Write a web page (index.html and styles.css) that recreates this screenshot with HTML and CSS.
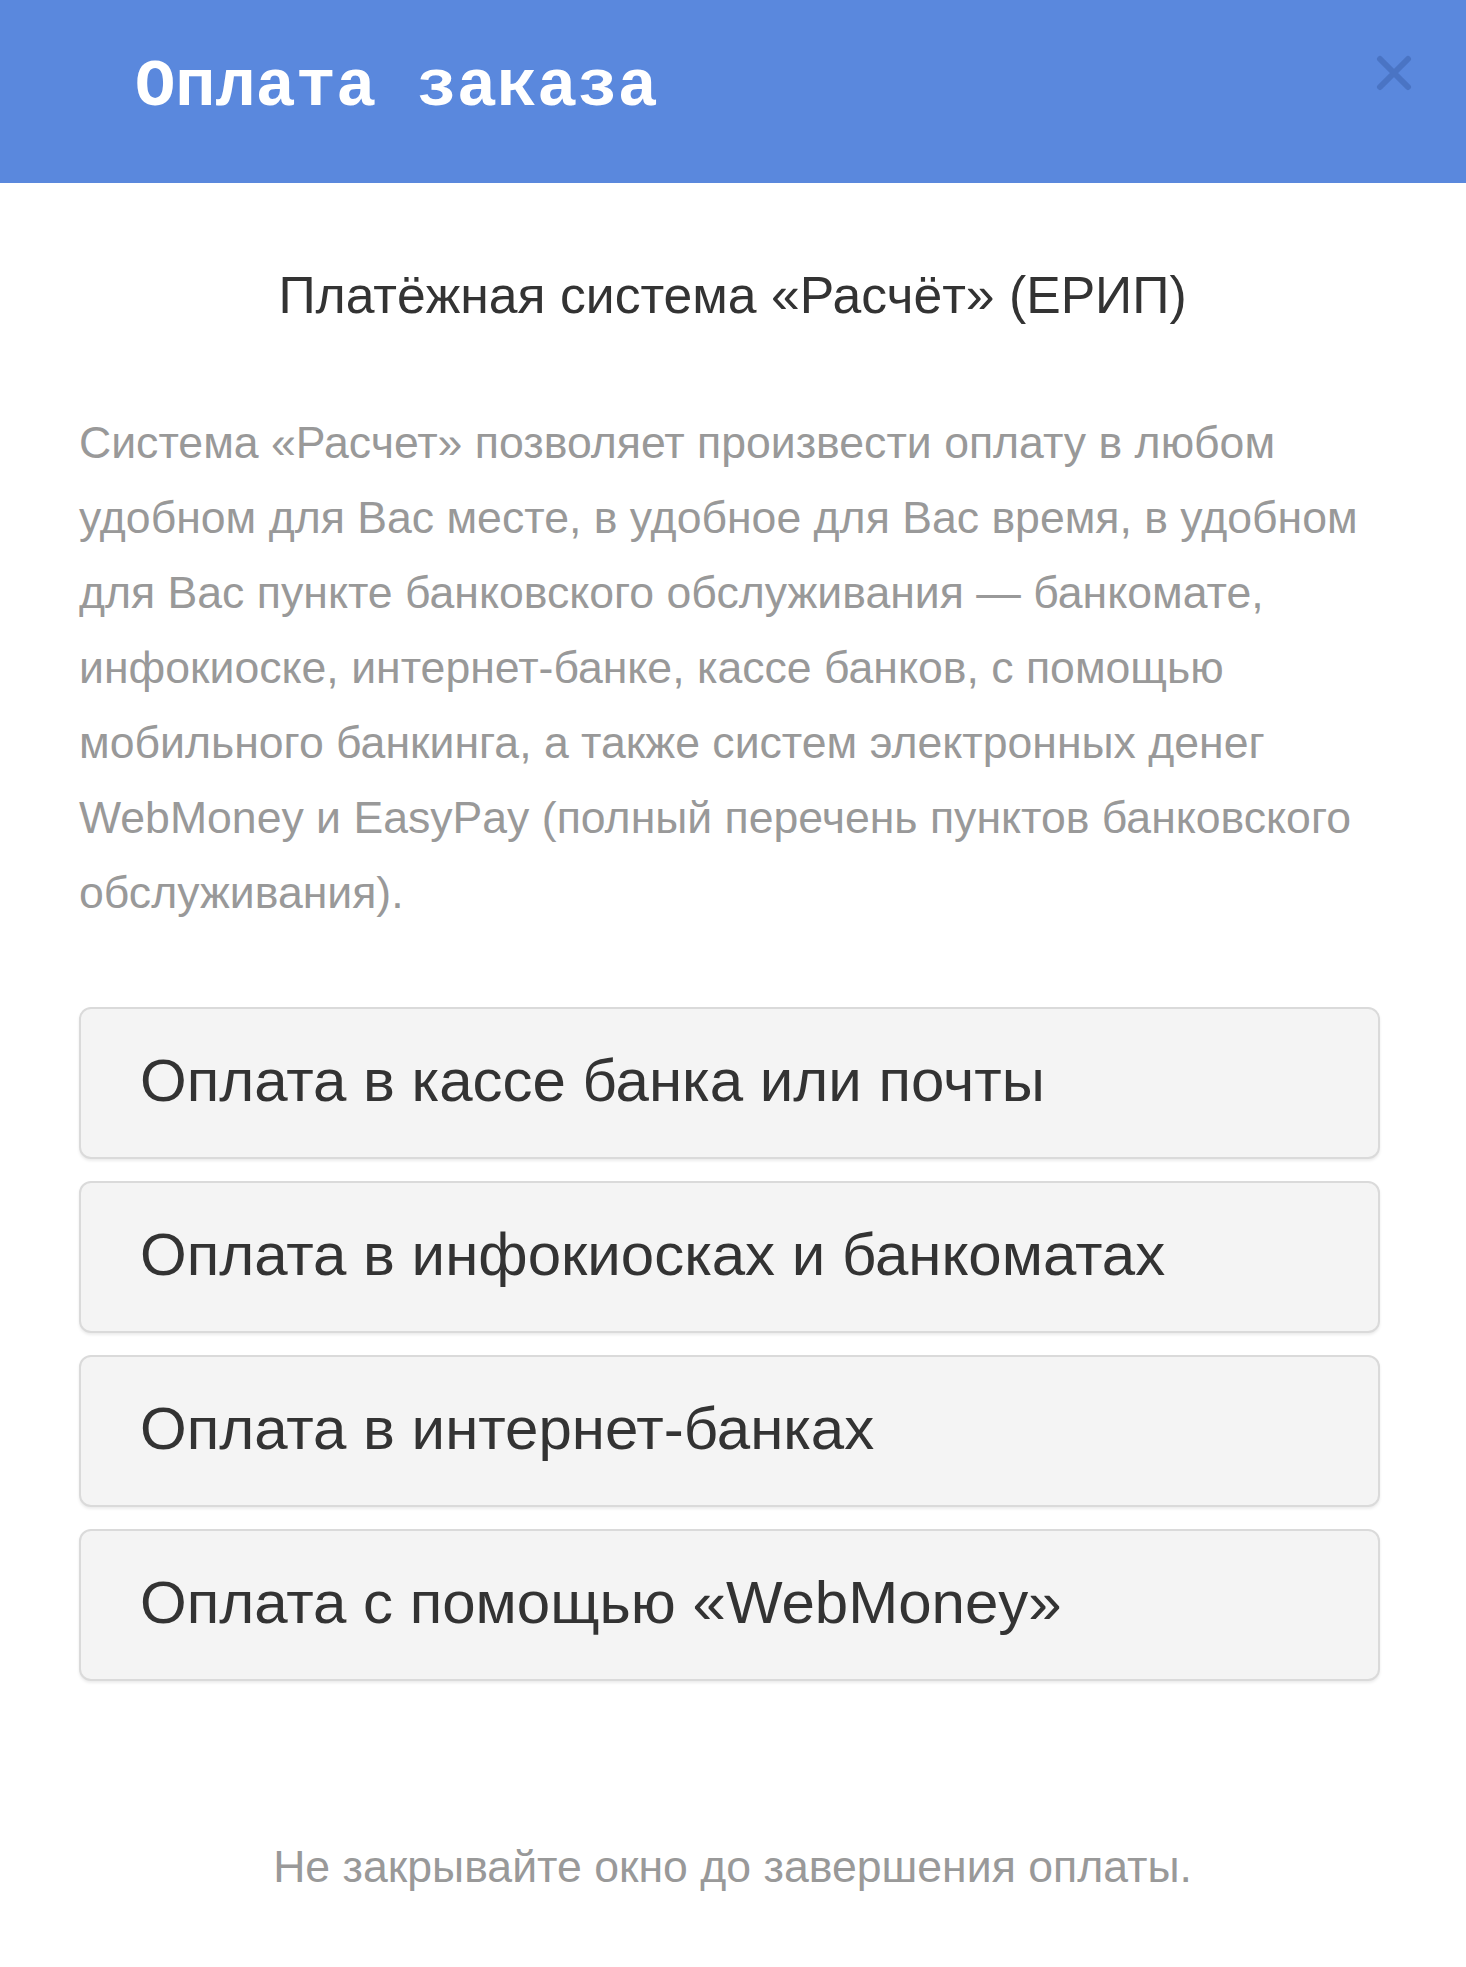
FILE: index.html
```html
<!DOCTYPE html>
<html lang="ru">
<head>
<meta charset="utf-8">
<title>Оплата заказа</title>
<link rel="stylesheet" href="styles.css">
</head>
<body>
<div class="modal">
  <header class="modal-header">
    <h1 class="modal-title">Оплата заказа</h1>
    <button class="close" aria-label="Закрыть">
      <svg viewBox="0 0 36 36" width="36" height="36"><path d="M4 4 L32 32 M32 4 L4 32" stroke="#4a74c4" stroke-width="6" stroke-linecap="round"/></svg>
    </button>
  </header>
  <main class="modal-body">
    <h2 class="subtitle">Платёжная система «Расчёт» (ЕРИП)</h2>
    <p class="desc">Система «Расчет» позволяет произвести оплату в любом<br>удобном для Вас месте, в удобное для Вас время, в удобном<br>для Вас пункте банковского обслуживания — банкомате,<br>инфокиоске, интернет-банке, кассе банков, с помощью<br>мобильного банкинга, а также систем электронных денег<br>WebMoney и EasyPay (полный перечень пунктов банковского<br>обслуживания).</p>
    <div class="options">
      <div class="option">Оплата в кассе банка или почты</div>
      <div class="option">Оплата в инфокиосках и банкоматах</div>
      <div class="option">Оплата в интернет-банках</div>
      <div class="option">Оплата с помощью «WebMoney»</div>
    </div>
    <p class="note">Не закрывайте окно до завершения оплаты.</p>
  </main>
</div>
</body>
</html>
```
FILE: styles.css
```css
html, body {
  margin: 0;
  padding: 0;
  background: #ffffff;
}
body {
  font-family: "Liberation Sans", Arial, sans-serif;
}
.modal-header {
  height: 183px;
  background: #5a88dd;
  display: flex;
  justify-content: space-between;
  align-items: flex-start;
  box-sizing: border-box;
  padding: 0 54px 0 135px;
}
.modal-title {
  margin: 0;
  padding-top: 51px;
  font-family: "Liberation Mono", "Courier New", monospace;
  font-weight: bold;
  font-size: 67px;
  line-height: 72px;
  color: #ffffff;
  letter-spacing: 0;
}
.close {
  margin-top: 55px;
  padding: 0;
  border: 0;
  background: none;
  width: 36px;
  height: 36px;
  display: flex;
}
.modal-body {
  padding: 80px 80px 40px 79px;
}
.subtitle {
  margin: 0;
  text-align: center;
  font-weight: normal;
  font-size: 51.7px;
  line-height: 64px;
  color: #333333;
}
.desc {
  margin: 78px 0 0;
  font-size: 44.6px;
  line-height: 75px;
  color: #999999;
  white-space: nowrap;
}
.options {
  margin-top: 77px;
  margin-right: 6px;
  display: flex;
  flex-direction: column;
  gap: 22px;
}
.option {
  height: 152px;
  box-sizing: border-box;
  display: flex;
  align-items: center;
  padding: 0 0 6px 59px;
  background: #f4f4f4;
  border: 2px solid #dadada;
  border-radius: 12px;
  box-shadow: 0 2px 3px rgba(0, 0, 0, 0.08);
  font-size: 60px;
  color: #333333;
}
.note {
  margin: 158px 0 0;
  text-align: center;
  font-size: 44.6px;
  line-height: 56px;
  color: #999999;
}
```
